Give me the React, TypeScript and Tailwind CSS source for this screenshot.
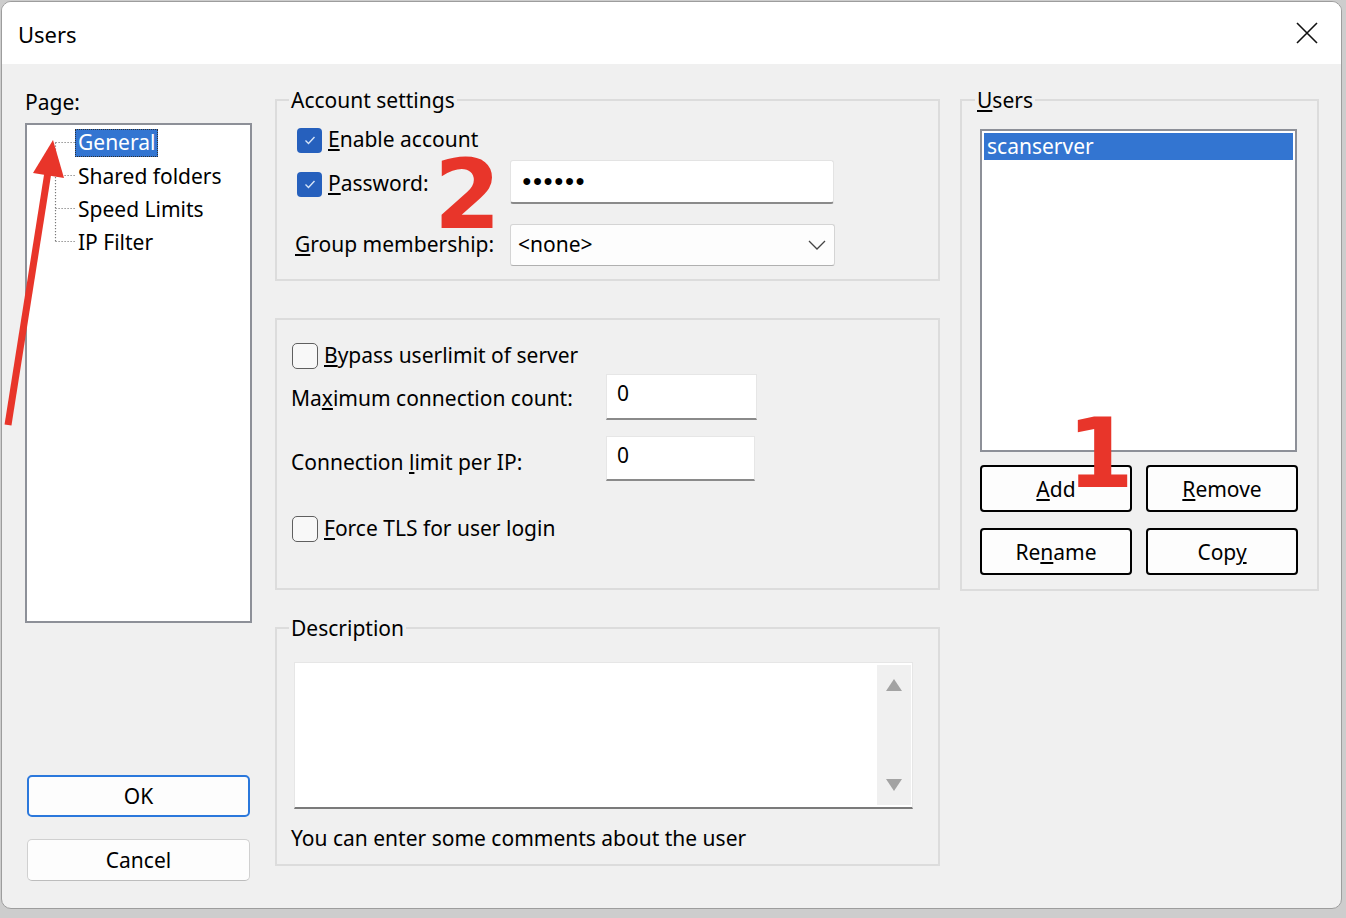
import React from 'react';

function Check({ checked }: { checked?: boolean }) {
  if (checked) {
    return (
      <span className="flex h-[25px] w-[25px] shrink-0 items-center justify-center rounded-[4px] bg-[#2660bd]">
        <svg width="16" height="16" viewBox="0 0 16 16">
          <polyline points="3.5,8.5 6.5,11.5 12.5,5" fill="none" stroke="#d6e4f7" strokeWidth="1.4" />
        </svg>
      </span>
    );
  }
  return <span className="block h-[26px] w-[26px] shrink-0 rounded-[5px] border-[1.5px] border-[#5f5f5f] bg-[#f8f8f8]" />;
}

function Btn({ children, w = 'w-[152px]', h = 'h-[47px]' }: { children: React.ReactNode; w?: string; h?: string }) {
  return (
    <button className={`${w} ${h} flex items-center justify-center rounded-[4px] border-2 border-black bg-[#fdfdfd] pt-[3px] text-black`}>
      {children}
    </button>
  );
}

function TreeRow({ label, pos, selected }: { label: string; pos: 'first' | 'mid' | 'last'; selected?: boolean }) {
  return (
    <div className="flex h-[33px] items-center">
      <svg width="48" height="33" className="shrink-0">
        <line
          x1="28.5"
          x2="28.5"
          y1={pos === 'first' ? 16.5 : 0}
          y2={pos === 'last' ? 16.5 : 33}
          stroke="#7a7a7a"
          strokeWidth="1.2"
          strokeDasharray="1.2 1.8"
        />
        <line x1="28.5" x2="48" y1="16.5" y2="16.5" stroke="#7a7a7a" strokeWidth="1.2" strokeDasharray="1.2 1.8" />
      </svg>
      {selected ? (
        <span className="flex h-[28px] items-center border border-dotted border-[#303030] bg-[#3375d1] px-[2px] pt-[1px] text-white">{label}</span>
      ) : (
        <span className="px-[3px] pt-[2px]">{label}</span>
      )}
    </div>
  );
}

export default function App() {
  return (
    <div className="relative h-[918px] w-[1346px] overflow-hidden bg-[#cdcdcd] font-['Noto_Sans',sans-serif] text-[21px] text-black">
      <div className="ml-[1px] mt-[1px] h-[908px] w-[1341px] overflow-hidden rounded-[10px] border border-[#9d9d9d] bg-[#f0f0f0]">
        {/* title bar */}
        <div className="flex h-[62px] items-center justify-between bg-white pl-[16px] pr-[22px]">
          <span className="pt-[3px] text-[22px]">Users</span>
          <svg width="24" height="24" viewBox="0 0 24 24">
            <path d="M2 2 L22 22 M22 2 L2 22" stroke="#111" strokeWidth="1.6" />
          </svg>
        </div>

        <div className="flex items-start pl-[23px] pt-[22px]">
          {/* left column */}
          <div className="flex w-[227px] flex-col">
            <div className="h-[28px] pt-[2px] leading-[28px]">Page:</div>
            <div className="mt-[9px] h-[500px] border-2 border-[#8d9098] bg-white pt-[1px]">
              <TreeRow label="General" pos="first" selected />
              <TreeRow label="Shared folders" pos="mid" />
              <TreeRow label="Speed Limits" pos="mid" />
              <TreeRow label="IP Filter" pos="last" />
            </div>
            <button className="ml-[2px] mt-[152px] flex h-[42px] w-[223px] items-center justify-center rounded-[5px] border-2 border-[#2b78dc] bg-[#fdfdfd] pt-[2px]">
              OK
            </button>
            <button className="ml-[2px] mt-[22px] flex h-[42px] w-[223px] items-center justify-center rounded-[5px] border border-[#d0d0d0] border-b-[#bdbdbd] bg-[#fdfdfd] pt-[2px]">
              Cancel
            </button>
          </div>

          {/* middle column */}
          <div className="ml-[23px] flex w-[665px] flex-col">
            <fieldset className="h-[195px] border-2 border-[#dcdcdc]">
              <legend className="ml-[12px] px-[2px] leading-[28px]">Account settings</legend>
              <div className="flex flex-col pl-[20px] pt-[12px]">
                <div className="flex h-[28px] items-center gap-[6px]">
                  <Check checked />
                  <span>
                    <u>E</u>nable account
                  </span>
                </div>
                <div className="mt-[6px] flex h-[44px] items-center">
                  <div className="flex w-[213px] items-center gap-[6px] pt-[4px]">
                    <Check checked />
                    <span>
                      <u>P</u>assword:
                    </span>
                  </div>
                  <div className="flex h-[44px] w-[324px] items-center rounded-[3px] border border-[#e3e3e3] border-b-2 border-b-[#8a8a8a] bg-white pb-[4px] pl-[11px] text-[16px] tracking-[1px]">
                    ●●●●●●
                  </div>
                </div>
                <div className="mt-[20px] flex h-[42px] items-center">
                  <span className="-ml-[2px] w-[215px]">
                    <u>G</u>roup membership:
                  </span>
                  <div className="flex h-[42px] w-[325px] items-center justify-between rounded-[3px] border border-[#d4d4d4] border-b-[#b0b0b0] bg-[#fdfdfd] pl-[7px] pr-[8px]">
                    <span>&lt;none&gt;</span>
                    <svg width="18" height="10" viewBox="0 0 18 10">
                      <path d="M1 1 L9 9 L17 1" fill="none" stroke="#444" strokeWidth="1.3" />
                    </svg>
                  </div>
                </div>
              </div>
            </fieldset>

            <fieldset className="mt-[37px] h-[272px] border-2 border-[#dcdcdc]">
              <div className="flex flex-col pl-[15px] pt-[22px]">
                <div className="flex h-[28px] items-center gap-[6px]">
                  <Check />
                  <span>
                    <u>B</u>ypass userlimit of server
                  </span>
                </div>
                <div className="mt-[4px] flex h-[46px] items-center">
                  <span className="-ml-[1px] w-[315px] pt-[4px]">
                    Ma<u>x</u>imum connection count:
                  </span>
                  <div className="h-[46px] w-[151px] border border-[#e6e6e6] border-b-2 border-b-[#8a8a8a] bg-white pl-[10px] pt-[3px]">0</div>
                </div>
                <div className="mt-[16px] flex h-[45px] items-center">
                  <span className="-ml-[1px] w-[315px] pt-[8px]">
                    Connection <u>l</u>imit per IP:
                  </span>
                  <div className="h-[45px] w-[149px] border border-[#e6e6e6] border-b-2 border-b-[#8a8a8a] bg-white pl-[10px] pt-[3px]">0</div>
                </div>
                <div className="mt-[34px] flex h-[28px] items-center gap-[6px]">
                  <Check />
                  <span>
                    <u>F</u>orce TLS for user login
                  </span>
                </div>
              </div>
            </fieldset>

            <fieldset className="mt-[24px] h-[252px] border-2 border-[#dcdcdc]">
              <legend className="ml-[12px] px-[2px] leading-[28px]">Description</legend>
              <div className="flex flex-col pl-[17px] pt-[20px]">
                <div className="flex h-[147px] w-[619px] border border-[#e6e6e6] border-b-2 border-b-[#7a7a7a] bg-white">
                  <div className="flex-1" />
                  <div className="my-[2px] mr-[1px] flex w-[34px] flex-col items-center justify-between bg-[#f0f0f0] py-[14px]">
                    <svg width="16" height="12" viewBox="0 0 16 12">
                      <path d="M8 0 L16 12 L0 12 Z" fill="#a3a3a3" />
                    </svg>
                    <svg width="16" height="12" viewBox="0 0 16 12">
                      <path d="M0 0 L16 0 L8 12 Z" fill="#a3a3a3" />
                    </svg>
                  </div>
                </div>
                <div className="-ml-[3px] mt-[15px] h-[28px] leading-[28px]">You can enter some comments about the user</div>
              </div>
            </fieldset>
          </div>

          {/* right column */}
          <fieldset className="ml-[20px] h-[505px] w-[359px] border-2 border-[#dcdcdc]">
            <legend className="ml-[13px] px-[2px] leading-[28px]">
              <u>U</u>sers
            </legend>
            <div className="flex flex-col pl-[18px] pt-[15px]">
              <div className="h-[323px] w-[317px] border-2 border-[#8d9098] bg-white p-[2px]">
                <div className="flex h-[27px] items-center bg-[#3375d1] pl-[3px] pt-[1px] text-white">scanserver</div>
              </div>
              <div className="mt-[13px] flex gap-[14px]">
                <Btn>
                  <span>
                    <u>A</u>dd
                  </span>
                </Btn>
                <Btn>
                  <span>
                    <u>R</u>emove
                  </span>
                </Btn>
              </div>
              <div className="mt-[16px] flex gap-[14px]">
                <Btn>
                  <span>
                    Re<u>n</u>ame
                  </span>
                </Btn>
                <Btn>
                  <span>
                    Cop<u>y</u>
                  </span>
                </Btn>
              </div>
            </div>
          </fieldset>
        </div>
      </div>

      {/* red annotations */}
      <div className="pointer-events-none absolute left-[434px] top-[147px] font-['DejaVu_Sans',sans-serif] text-[96px] font-bold leading-none text-[#e8352a]">2</div>
      <div className="pointer-events-none absolute left-[1067px] top-[406px] font-['DejaVu_Sans',sans-serif] text-[96px] font-bold leading-none text-[#e8352a]">1</div>
      <svg className="pointer-events-none absolute left-0 top-0" width="120" height="440">
        <line x1="8" y1="425" x2="48" y2="172" stroke="#e8352a" strokeWidth="7" />
        <polygon points="53,140 33,173 64,178" fill="#e8352a" />
      </svg>
    </div>
  );
}
